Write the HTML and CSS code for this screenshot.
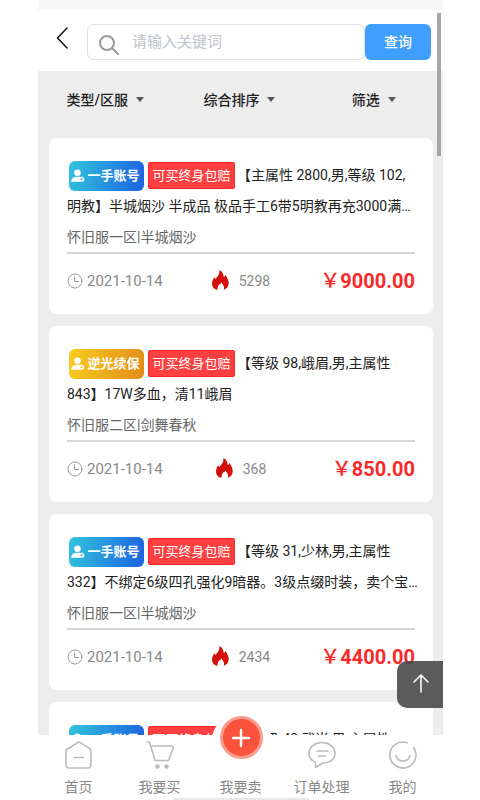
FILE: index.html
```html
<!DOCTYPE html>
<html lang="zh-CN">
<head>
<meta charset="utf-8">
<meta name="viewport" content="width=device-width, initial-scale=1">
<title>账号交易</title>
<link rel="stylesheet" href="styles.css">
</head>
<body>
<svg class="defs" aria-hidden="true">
  <symbol id="user" viewBox="0 0 14 14"><circle cx="6.5" cy="3.8" r="3.3"/><path fill-rule="evenodd" d="M.3 12.800C.3 9.500 2.500 7.800 6.500 7.800H10.800A2.500 2.500 0 0 1 10.800 12.800ZM10.500 9.200a1.100 1.100 0 1 0 0 2.200a1.100 1.100 0 1 0 0-2.200Z"/></symbol>
  <symbol id="clock" viewBox="0 0 16 16"><circle cx="8" cy="8" r="7"/><path d="M7.500 3.800v4.700h4"/></symbol>
  <symbol id="fire" viewBox="0 0 17 20"><path d="M7.300 0c3.200 1.600 4.400 3.900 4.400 7.200.9-.5 1.400-1.300 1.500-2.500 2.400 3.400 3.600 6 3.500 8.900-.1 3-1.900 5.200-5 6.400.9-2.700.1-5-2.600-7.400-.2 1-.5 1.600-1.200 2.200-.2-.4-.4-.6-.7-.8-.8 2-2.300 3.600-1.500 6C2.200 19.100.2 17 0 13.900-.1 11.200 1.200 9.300 2 7.200c.7.5 1 1 1.200 1.800C6 6.500 8 3.800 7.300 0Z"/></symbol>
</svg>
<div class="app">
  <div class="status"></div>
  <header class="head">
    <button class="back" aria-label="返回"><svg viewBox="0 0 12 22"><path d="M11 1 1.500 11 11 21"/></svg></button>
    <form class="search">
      <label class="field">
        <svg viewBox="0 0 22 22"><circle cx="9" cy="9" r="7"/><path d="m14 14 6 6"/></svg>
        <input type="text" placeholder="请输入关键词" aria-label="关键词">
      </label>
      <button class="go" type="button">查询</button>
    </form>
  </header>
  <main class="body">
    <div class="filters">
      <button>类型/区服<i></i></button>
      <button>综合排序<i></i></button>
      <button>筛选<i></i></button>
    </div>
    <div class="list">
      <article class="card">
        <div class="line"><span class="tag blue"><svg><use href="#user"/></svg>一手账号</span><span class="cover">可买终身包赔</span><span>【主属性 2800,男,等级 102,</span></div>
        <div class="line">明教】半城烟沙 半成品 极品手工6带5明教再充3000满…</div>
        <div class="line area">怀旧服一区|半城烟沙</div>
        <div class="meta"><span class="date"><svg><use href="#clock"/></svg>2021-10-14</span><span class="hot"><svg><use href="#fire"/></svg>5298</span><strong class="price"><span>￥</span>9000.00</strong></div>
      </article>
      <article class="card">
        <div class="line"><span class="tag gold"><svg><use href="#user"/></svg>逆光续保</span><span class="cover">可买终身包赔</span><span>【等级 98,峨眉,男,主属性</span></div>
        <div class="line">843】17W多血，清11峨眉</div>
        <div class="line area">怀旧服二区|剑舞春秋</div>
        <div class="meta"><span class="date"><svg><use href="#clock"/></svg>2021-10-14</span><span class="hot"><svg><use href="#fire"/></svg>368</span><strong class="price"><span>￥</span>850.00</strong></div>
      </article>
      <article class="card">
        <div class="line"><span class="tag blue"><svg><use href="#user"/></svg>一手账号</span><span class="cover">可买终身包赔</span><span>【等级 31,少林,男,主属性</span></div>
        <div class="line">332】不绑定6级四孔强化9暗器。3级点缀时装，卖个宝…</div>
        <div class="line area">怀旧服一区|半城烟沙</div>
        <div class="meta"><span class="date"><svg><use href="#clock"/></svg>2021-10-14</span><span class="hot"><svg><use href="#fire"/></svg>2434</span><strong class="price"><span>￥</span>4400.00</strong></div>
      </article>
      <article class="card">
        <div class="line"><span class="tag blue"><svg><use href="#user"/></svg>一手账号</span><span class="cover">可买终身包赔</span><span>【等级 40,武当,男,主属性</span></div>
      </article>
    </div>
  </main>
  <nav class="nav">
    <a href="#"><svg viewBox="0 0 28 28"><path d="M3.500 7.500 12.500 1.600a2.800 2.800 0 0 1 3 0l9 5.900a2.800 2.800 0 0 1 1.500 2.500v14a3 3 0 0 1-3 3H4a3 3 0 0 1-3-3V10a2.800 2.800 0 0 1 1.500-2.500ZM9.500 16.500h9"/></svg>首页</a>
    <a href="#"><svg viewBox="0 0 28 28"><path d="M1 1h2.500L9 19.500h13.500L27 7.500q.6-2.500-1.500-2.500H6"/><circle class="dot" cx="11.500" cy="25.500" r="2.200"/><circle class="dot" cx="20.500" cy="25.500" r="2.200"/></svg>我要买</a>
    <a href="#" class="sell"><span class="fab"><svg viewBox="0 0 20 20"><path d="M10 2v16M2 10h16"/></svg></span>我要卖</a>
    <a href="#"><svg viewBox="0 0 28 28"><path d="M7.500 21.500C3.500 19.500 1 17 1 12.500 1 6 7 1.500 14 1.500S27 6 27 12.500 21 22 15 22L7.500 26.500ZM9 10h11M10.500 15h7"/></svg>订单处理</a>
    <a href="#"><svg viewBox="0 0 28 28"><path d="M18 1.700A13 13 0 1 0 24.500 6.500M7 14.500a7.200 7.200 0 0 0 14 0"/></svg>我的</a>
  </nav>
  <div class="thumb"></div>
  <button class="top" aria-label="回到顶部"><svg viewBox="0 0 16 20"><path d="M8 19V2M1 9l7-7 7 7"/></svg></button>
  <div class="homebar"></div>
</div>
</body>
</html>
```
FILE: styles.css
```css
* { box-sizing: border-box; }
body {
  margin: 0;
  padding: 0 37px 0 38px;
  background: #fff;
  color: #222;
  font: 14px/20px Roboto, "Noto Sans CJK SC", sans-serif;
}
button { border: 0; padding: 0; background: none; color: inherit; font: inherit; }
svg { fill: none; stroke-linecap: round; stroke-linejoin: round; flex: none; }
.defs { display: none; }
.app { position: relative; display: flex; flex-direction: column; height: 100vh; overflow: hidden; }
.status { height: 10px; background: #f7f7f7; flex: none; }

.head { display: flex; align-items: center; flex: none; height: 61px; padding: 2px 12px 0 18px; }
.back { width: 31px; height: 32px; padding-bottom: 8px; text-align: left; }
.back svg { width: 12px; height: 22px; stroke: #111; stroke-width: 1.5; display: block; }
.search { display: flex; flex: 1; height: 36px; }
.field {
  display: flex; align-items: center; flex: 1; min-width: 0;
  border: 1px solid #dcdfe6; border-radius: 7px; padding-left: 10px;
}
.field svg { width: 22px; height: 22px; margin-top: 6px; stroke: #999; stroke-width: 2; }
.field input {
  flex: 1; min-width: 0; margin-left: 12px; padding: 0;
  border: 0; outline: 0; background: none; font: inherit; font-size: 15px;
}
.field input::placeholder { color: #c0c4cc; }
.go { width: 66px; border-radius: 6px; background: #409eff; color: #fff; font-weight: 500; }

.body { flex: 1; min-height: 0; overflow: hidden; background: #ededed; }
.filters { display: flex; height: 67px; padding: 0 2px 10px 0; }
.filters button { flex: 1; display: flex; align-items: center; justify-content: center; gap: 8px; font-weight: 500; }
.filters i { border: 4px solid transparent; border-top: 5px solid #555; border-bottom: 0; }
.list { display: flex; flex-direction: column; gap: 12px; padding: 0 10px 0 11px; }
.card { height: 176px; padding: 21px 18px 0; border-radius: 8px; background: #fff; }
.line { display: flex; align-items: center; height: 31px; white-space: nowrap; }
.tag, .cover { display: flex; align-items: center; justify-content: center; color: #fff; font-size: 13px; }
.tag { width: 75px; height: 30px; margin: 2px 4px 0 2px; padding-right: 2px; gap: 2px; border-radius: 6px; font-weight: 700; }
.tag svg { width: 14px; height: 14px; fill: #fff; }
.blue { background: linear-gradient(100deg, #32c4dc, #1c62e2); }
.gold { background: linear-gradient(100deg, #f9cd20, #e28c18); }
.cover { width: 87px; height: 27px; margin: 2px 2px 0 0; border: 1px solid #f22; border-radius: 2px; background: #ff4040; }
.area { color: #666; }
.meta {
  display: grid; grid-template-columns: 1fr auto 1fr; align-items: center;
  height: 56px; border-top: 2px solid #d6d6d6; color: #888; font-size: 15px;
}
.meta > span { display: flex; align-items: center; }
.date svg { width: 16px; height: 16px; margin-right: 4px; stroke: #999; }
.hot { font-size: 14px; }
.hot svg { width: 17px; height: 20px; margin: 0 10px 2px 0; fill: #d20f0a; }
.price { text-align: right; color: #f82a2a; font-size: 20px; font-weight: 700; }
.price span { font-weight: 500; }

.nav { position: relative; display: flex; flex: none; height: 65px; background: #fff; }
.nav a {
  flex: 1; display: flex; flex-direction: column; align-items: center; justify-content: flex-end;
  gap: 8px; padding-bottom: 3px; color: #888; text-decoration: none;
}
.nav a > svg { width: 28px; height: 28px; stroke: #bbb; stroke-width: 1.6; }
.nav .dot { fill: #bbb; stroke: none; }
.nav .sell { position: relative; }
.fab {
  position: absolute; top: -19px; left: 50%; margin-left: -21px;
  display: flex; align-items: center; justify-content: center;
  width: 43px; height: 43px; border: 3px solid #fb9b8e; border-radius: 50%;
  background: #f9533e; box-shadow: 0 6px 0 9px #fff;
}
.fab svg { width: 20px; height: 20px; stroke: #fff; stroke-width: 2.4; }

.thumb { position: absolute; top: 13px; right: 2px; width: 4px; height: 143px; background: #a6a6a6; }
.top {
  position: absolute; right: 0; bottom: 92px; width: 46px; height: 47px;
  display: flex; align-items: center; justify-content: center;
  border-radius: 10px 0 0 10px; background: rgba(70, 70, 70, .88);
}
.top svg { width: 16px; height: 20px; margin-bottom: 4px; margin-left: 2px; stroke: #fff; stroke-width: 1.5; }
.homebar { position: absolute; bottom: 0; left: 50%; width: 135px; height: 2px; margin-left: -67px; background: #e8e8e8; }
```
